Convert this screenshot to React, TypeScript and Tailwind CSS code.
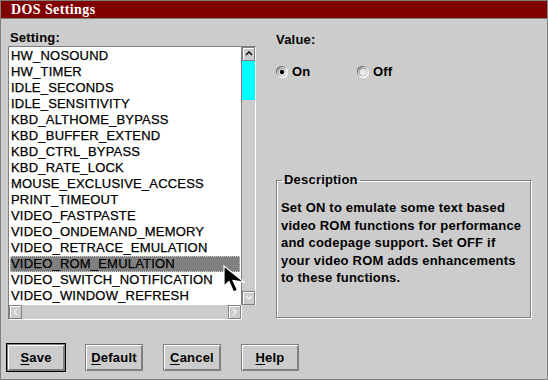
import React from 'react';

const settings = [
  'HW_NOSOUND',
  'HW_TIMER',
  'IDLE_SECONDS',
  'IDLE_SENSITIVITY',
  'KBD_ALTHOME_BYPASS',
  'KBD_BUFFER_EXTEND',
  'KBD_CTRL_BYPASS',
  'KBD_RATE_LOCK',
  'MOUSE_EXCLUSIVE_ACCESS',
  'PRINT_TIMEOUT',
  'VIDEO_FASTPASTE',
  'VIDEO_ONDEMAND_MEMORY',
  'VIDEO_RETRACE_EMULATION',
  'VIDEO_ROM_EMULATION',
  'VIDEO_SWITCH_NOTIFICATION',
  'VIDEO_WINDOW_REFRESH',
];

const selected = 'VIDEO_ROM_EMULATION';

// small arrow glyph for the scroll buttons
function Chevron({ dir, color }: { dir: 'up' | 'down' | 'left' | 'right'; color: string }) {
  const pts = {
    up: '1,5 4,2 7,5',
    down: '1,2 4,5 7,2',
    left: '5,1 2,4 5,7',
    right: '2,1 5,4 2,7',
  }[dir];
  return (
    <svg width="8" height="8" viewBox="0 0 8 8">
      <polyline points={pts} fill="none" stroke={color} strokeWidth="1.3" />
    </svg>
  );
}

function ScrollButton({ dir, color }: { dir: 'up' | 'down' | 'left' | 'right'; color: string }) {
  return (
    <div className="w-[13px] h-[14px] flex items-center justify-center bg-[#cccccc] border border-[#808080] shadow-[inset_1px_1px_0_#fff]">
      <Chevron dir={dir} color={color} />
    </div>
  );
}

function Radio({ checked }: { checked: boolean }) {
  return (
    <svg width="12" height="12" viewBox="0 0 12 12">
      <circle cx="5.5" cy="5.5" r="5.5" fill="#6a6a6a" />
      <circle cx="6.5" cy="6.5" r="5.5" fill="#ffffff" />
      <circle cx="6" cy="6" r="4.5" fill="#9a9a9a" />
      <circle cx="6.3" cy="6.3" r="3.6" fill="#e8e8e8" />
      {checked && <circle cx="6" cy="6" r="2.2" fill="#000000" />}
    </svg>
  );
}

function DlgButton({ label, isDefault }: { label: string; isDefault?: boolean }) {
  return (
    <button
      className={`w-[58px] h-[27px] bg-[#cccccc] border border-[#808080] shadow-[inset_1px_1px_0_#fff,inset_-1px_-1px_0_#808080] text-[13px] font-bold tracking-[0.2px] flex items-center justify-center ${isDefault ? 'outline outline-1 outline-black' : ''}`}
    >
      <span className="underline underline-offset-2">{label[0]}</span>
      {label.slice(1)}
    </button>
  );
}

export default function App() {
  return (
    <div className="relative w-[548px] h-[380px] overflow-hidden bg-[#cccccc] border border-[#808080] font-['Liberation_Sans',Arial,sans-serif] text-black flex flex-col">
      {/* TITLE */}
      <div className="h-[18px] shrink-0 bg-[#800000] border-b border-[#808080] pl-[10px] text-white font-['Liberation_Serif',serif] font-bold text-[14px] leading-[17px] tracking-[0.4px]">
        DOS Settings
      </div>

      <div className="flex pl-[7px] pt-[11px]">
        {/* LEFT: SETTING LIST */}
        <div className="w-[248px] flex flex-col">
          <div className="pl-[2px] text-[13px] leading-[16px] font-bold tracking-[0.2px]">Setting:</div>
          <div className="flex border-t border-l border-[#808080]">
            <div className="w-[232px] h-[258px] bg-white p-[1px] overflow-hidden">
              {settings.map((s) => (
                <div
                  key={s}
                  className={`h-[16px] pl-[1px] text-[13px] leading-[16px] tracking-[0.2px] whitespace-nowrap [-webkit-text-stroke:0.25px_#000] ${s === selected ? 'bg-[#808080] outline outline-1 outline-dotted outline-[#cccccc] -outline-offset-1' : ''}`}
                >
                  {s}
                </div>
              ))}
            </div>
            <div className="w-[15px] h-[258px] border-l border-[#808080] border-r border-r-white flex flex-col bg-[#cccccc]">
              <ScrollButton dir="up" color="#000000" />
              <div className="h-[39px] bg-[#00ffff]" />
              <div className="flex-1" />
              <ScrollButton dir="down" color="#f4f4f4" />
            </div>
          </div>
          <div className="w-[234px] h-[15px] border-l border-[#808080] border-r border-b border-r-white border-b-white flex justify-between bg-[#cccccc]">
            <ScrollButton dir="left" color="#f4f4f4" />
            <ScrollButton dir="right" color="#f4f4f4" />
          </div>
        </div>

        {/* RIGHT: VALUE + DESCRIPTION */}
        <div className="ml-[20px] w-[256px] flex flex-col">
          <div className="mt-[2px] text-[13px] leading-[16px] font-bold tracking-[0.2px]">Value:</div>
          <div className="mt-[16px] flex items-center text-[13px] leading-[16px] font-bold tracking-[0.2px]">
            <div className="w-[81px] flex items-center gap-[4px]">
              <Radio checked />
              <span>On</span>
            </div>
            <div className="flex items-center gap-[4px]">
              <Radio checked={false} />
              <span>Off</span>
            </div>
          </div>
          <fieldset className="mt-[92px] w-[255px] h-[146px] border border-[#808080] shadow-[inset_1px_1px_0_#fff,1px_1px_0_#fff] pl-[4px] pr-[4px] pt-[11px]">
            <legend className="ml-[1px] px-[2px] text-[13px] leading-[16px] font-bold tracking-[0.2px]">Description</legend>
            <p className="text-[13px] leading-[17.5px] font-bold tracking-[0.2px]">
              Set ON to emulate some text based
              <br />
              video ROM functions for performance
              <br />
              and codepage support. Set OFF if
              <br />
              your video ROM adds enhancements
              <br />
              to these functions.
            </p>
          </fieldset>
        </div>
      </div>

      {/* BUTTONS */}
      <div className="mt-[24px] pl-[6px] flex gap-[20px]">
        <DlgButton label="Save" isDefault />
        <DlgButton label="Default" />
        <DlgButton label="Cancel" />
        <DlgButton label="Help" />
      </div>

      {/* MOUSE POINTER */}
      <svg className="absolute left-[222px] top-[264px]" width="24" height="30" viewBox="0 0 24 30">
        <path d="M1 1 L1 21 L6 16.5 L10.5 27 L14.5 25 L10 15.5 L21 17 Z" fill="#000" stroke="#fff" strokeWidth="1.2" strokeLinejoin="miter" />
      </svg>
    </div>
  );
}
